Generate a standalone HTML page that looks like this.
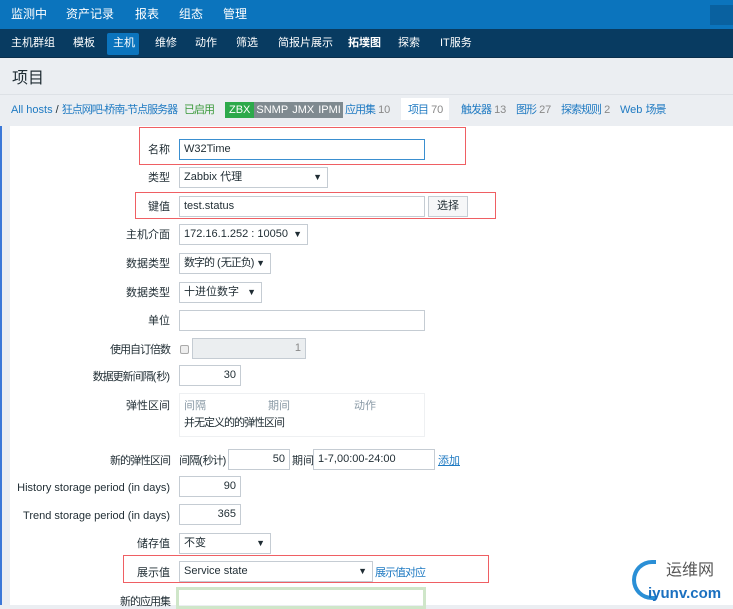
<!DOCTYPE html>
<html><head><meta charset="utf-8"><style>
*{box-sizing:border-box;margin:0;padding:0}
body{width:733px;height:605px;overflow:hidden;background:#ebeef2;font-family:"Liberation Sans","Noto Sans CJK SC",sans-serif;font-size:11px;line-height:13px;color:#1f2c33;position:relative}
.a{position:absolute;white-space:nowrap}
#top{position:absolute;left:0;top:0;width:733px;height:29px;background:#0b74bd}
#top span{position:absolute;top:7px;color:#fff;font-size:12px;line-height:14px}
#sub{position:absolute;left:0;top:29px;width:733px;height:29px;background:#083b61;border-bottom:1px solid #0a2f4c}
#sub span{position:absolute;top:8px;color:#fff;font-size:11px}
.lbl{position:absolute;text-align:right;width:170px;left:0;white-space:nowrap;margin-top:2px}
.in{position:absolute;background:#fff;border:1px solid #c5ccd3;height:21px;padding:0 4px;line-height:19px;font-size:11px;white-space:nowrap}
.r{text-align:right}
.sel:after{content:"▼";position:absolute;right:5px;top:0;font-size:9px}
.red{position:absolute;border:1px solid #ef5f63}
.lk{color:#1f7ac2}
.t{letter-spacing:-1px}
.n{letter-spacing:0}
</style></head><body>
<div id="top">
<span style="left:11px">监测中</span><span style="left:66px">资产记录</span><span style="left:135px">报表</span><span style="left:179px">组态</span><span style="left:223px">管理</span>
<div style="position:absolute;left:710px;top:5px;width:23px;height:20px;background:#0961a0"></div>
</div>
<div id="sub">
<div style="position:absolute;left:107px;top:4px;width:32px;height:22px;background:#0b74bd;border-radius:2px"></div>
<span style="left:11px">主机群组</span><span style="left:73px">模板</span><span style="left:113px">主机</span><span style="left:155px">维修</span><span style="left:195px">动作</span><span style="left:236px">筛选</span><span style="left:278px">简报片展示</span><span style="left:348px;font-weight:bold">拓墣图</span><span style="left:398px">探索</span><span style="left:440px">IT服务</span>
</div>
<div class="a" style="left:12px;top:70px;font-size:16px;line-height:18px">项目</div>
<div style="position:absolute;left:0;top:94px;width:733px;height:1px;background:#dde1e6"></div>
<div class="a" style="left:11px;top:104px"><span class="lk">All hosts</span> / <span class="lk t">狂点网吧-桥南-节点服务器</span></div>
<div class="a t" style="left:184px;top:104px;color:#3c9a3c">已启用</div>
<div class="a" style="left:225px;top:102px;height:16px;line-height:16px;color:#fff;font-size:11px;display:flex">
<span style="background:#2da94b;padding:0 4px">ZBX</span><span style="background:#7f8a90;padding:0 2px">SNMP</span><span style="background:#7f8a90;padding:0 2px">JMX</span><span style="background:#7f8a90;padding:0 2px">IPMI</span></div>
<div class="a" style="left:345px;top:104px"><span class="lk t">应用集</span> <span style="color:#888">10</span></div>
<div style="position:absolute;left:401px;top:98px;width:48px;height:22px;background:#fff"></div>
<div class="a" style="left:408px;top:104px"><span class="lk t">项目</span> <span style="color:#888">70</span></div>
<div class="a" style="left:461px;top:104px"><span class="lk t">触发器</span> <span style="color:#888">13</span></div>
<div class="a" style="left:516px;top:104px"><span class="lk t">图形</span> <span style="color:#888">27</span></div>
<div class="a" style="left:561px;top:104px"><span class="lk t">探索规则</span> <span style="color:#888">2</span></div>
<div class="a" style="left:620px;top:104px" ><span class="lk">Web <span class="t">场景</span></span></div>
<div style="position:absolute;left:10px;top:126px;width:723px;height:479px;background:#fff"></div>
<div style="position:absolute;left:0;top:126px;width:2px;height:479px;background:#3b78d8"></div>

<div class="red" style="left:139px;top:127px;width:327px;height:38px"></div>
<div class="lbl" style="top:142px">名称</div>
<div class="in" style="left:179px;top:139px;width:246px;border-color:#3a8fd0">W32Time</div>
<div class="lbl" style="top:170px">类型</div>
<div class="in sel" style="left:179px;top:167px;width:149px">Zabbix 代理</div>
<div class="red" style="left:135px;top:192px;width:361px;height:27px"></div>
<div class="lbl" style="top:199px">键值</div>
<div class="in" style="left:179px;top:196px;width:246px">test.status</div>
<div class="in" style="left:428px;top:196px;width:40px;text-align:center;background:#f6f7f8">选择</div>
<div class="lbl" style="top:227px">主机介面</div>
<div class="in sel" style="left:179px;top:224px;width:129px">172.16.1.252 : 10050</div>
<div class="lbl" style="top:256px">数据类型</div>
<div class="in sel" style="left:179px;top:253px;width:92px"><span class="t">数字的</span> (<span class="t">无正负</span>)</div>
<div class="lbl" style="top:285px">数据类型</div>
<div class="in sel" style="left:179px;top:282px;width:83px">十进位数字</div>
<div class="lbl" style="top:313px">单位</div>
<div class="in" style="left:179px;top:310px;width:246px"></div>
<div class="lbl t" style="top:342px">使用自订倍数</div>
<div style="position:absolute;left:180px;top:345px;width:9px;height:9px;border:1px solid #aaa;border-radius:2px;background:#eee"></div>
<div class="in r" style="left:192px;top:338px;width:114px;background:#ebeef0;color:#888">1</div>
<div class="lbl" style="top:369px"><span class="t">数据更新间隔</span>(<span class="t">秒</span>)</div>
<div class="in r" style="left:179px;top:365px;width:62px">30</div>
<div class="lbl" style="top:398px">弹性区间</div>
<div style="position:absolute;left:179px;top:393px;width:246px;height:44px;border:1px solid #eef0f2"></div>
<div class="a" style="left:184px;top:400px;color:#8a9aa6">间隔</div>
<div class="a" style="left:268px;top:400px;color:#8a9aa6">期间</div>
<div class="a" style="left:354px;top:400px;color:#8a9aa6">动作</div>
<div class="a t" style="left:184px;top:417px">并无定义的的弹性区间</div>
<div class="lbl t" style="top:453px">新的弹性区间</div>
<div class="a" style="left:179px;top:455px"><span class="t">间隔</span>(<span class="t">秒计</span>)</div>
<div class="in r" style="left:228px;top:449px;width:62px">50</div>
<div class="a" style="left:292px;top:455px">期间</div>
<div class="in" style="left:313px;top:449px;width:122px">1-7,00:00-24:00</div>
<div class="a lk" style="left:438px;top:455px;text-decoration:underline">添加</div>
<div class="lbl" style="top:480px">History storage period (in days)</div>
<div class="in r" style="left:179px;top:476px;width:62px">90</div>
<div class="lbl" style="top:508px">Trend storage period (in days)</div>
<div class="in r" style="left:179px;top:504px;width:62px">365</div>
<div class="lbl" style="top:536px">储存值</div>
<div class="in sel" style="left:179px;top:533px;width:92px">不变</div>
<div class="red" style="left:123px;top:555px;width:366px;height:28px"></div>
<div class="lbl" style="top:565px">展示值</div>
<div class="in sel" style="left:179px;top:561px;width:194px">Service state</div>
<div class="a lk t" style="left:375px;top:567px">展示值对应</div>
<div class="lbl t" style="top:594px">新的应用集</div>
<div style="position:absolute;left:176px;top:587px;height:22px;width:250px;border:3px solid #cfe6c9"></div>
<div style="position:absolute;left:632px;top:560px;width:24px;height:40px;border:4px solid #2a8fd6;border-right:none;border-radius:20px 0 0 20px"></div>
<div class="a" style="left:666px;top:562px;font-size:16px;line-height:18px;color:#555">运维网</div>
<div class="a" style="left:648px;top:585px;font-size:15px;line-height:17px;font-weight:bold;color:#1a70c0">iyunv.com</div>
</body></html>
